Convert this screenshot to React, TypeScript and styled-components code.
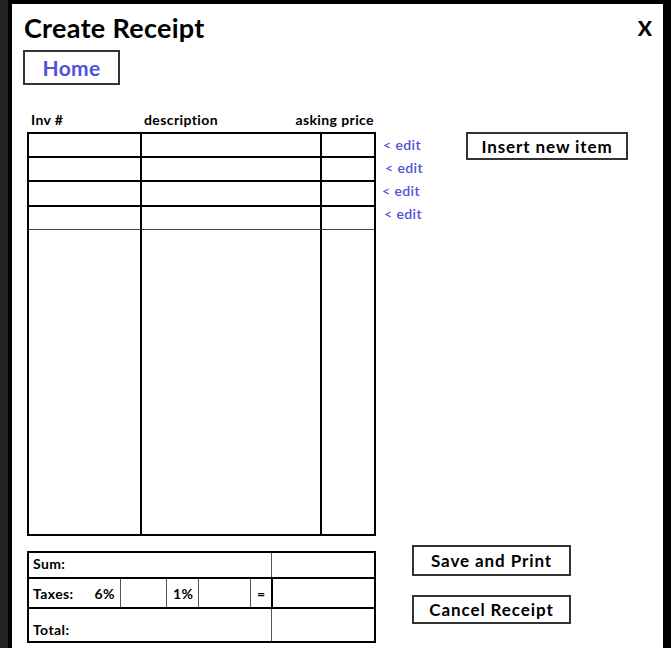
import React from 'react';
import styled, { createGlobalStyle } from 'styled-components';

const GlobalStyle = createGlobalStyle`
  html, body {
    margin: 0;
    padding: 0;
    background: #232323;
  }
  * {
    box-sizing: border-box;
  }
`;

const Frame = styled.div`
  margin-left: 8px;
  width: 663px;
  height: 648px;
  background: #fff;
  border-left: 4px solid #000;
  border-top: 4px solid #000;
  border-right: 8px solid #000;
  font-family: Lato, "Open Sans", sans-serif;
  color: #000;
  overflow: hidden;
`;

const Header = styled.div`
  display: flex;
  justify-content: space-between;
  align-items: flex-start;
  padding: 8px 11px 0 12px;
  height: 46px;
`;

const Title = styled.h1`
  margin: 0;
  font-size: 27px;
  font-weight: 700;
  line-height: 31px;
  letter-spacing: 0.3px;
`;

const Close = styled.span`
  font-size: 21px;
  font-weight: 900;
  line-height: 24px;
  margin-top: 4px;
`;

const HomeButton = styled.button`
  display: block;
  margin-left: 11px;
  width: 97px;
  height: 35px;
  background: #fff;
  border: 2px solid #333;
  color: #5252d6;
  font-family: inherit;
  font-size: 21px;
  font-weight: 700;
  letter-spacing: 0.3px;
  padding: 0;
`;

const Main = styled.div`
  display: flex;
  margin: 25px 0 0 15px;
`;

const LeftCol = styled.div`
  width: 349px;
  display: flex;
  flex-direction: column;
`;

const Labels = styled.div`
  display: grid;
  grid-template-columns: 115px 180px 54px;
  height: 22px;
  font-size: 14px;
  font-weight: 700;
  letter-spacing: 0.4px;
  line-height: 20px;
`;

const Label = styled.span<{ $right?: boolean; $pad?: number }>`
  padding-left: ${(p) => p.$pad ?? 0}px;
  padding-right: ${(p) => (p.$right ? 2 : 0)}px;
  text-align: ${(p) => (p.$right ? 'right' : 'left')};
  white-space: nowrap;
  direction: ${(p) => (p.$right ? 'rtl' : 'ltr')};
`;

const ItemsTable = styled.div`
  display: grid;
  grid-template-columns: 113px 180px 52px;
  grid-template-rows: 24px 24px 25px 23px 1fr;
  height: 404px;
  border: 2px solid #000;
`;

const Cell = styled.div<{ $last?: boolean; $thin?: boolean; $open?: boolean }>`
  border-right: ${(p) => (p.$last ? 'none' : '2px solid #000')};
  border-bottom: ${(p) =>
    p.$open ? 'none' : p.$thin ? '1px solid #444' : '2px solid #000'};
`;

const Summary = styled.div`
  margin-top: 15px;
  height: 92px;
  border: 2px solid #000;
  display: flex;
  flex-direction: column;
`;

const SumRow = styled.div<{ $h: number; $open?: boolean }>`
  display: flex;
  height: ${(p) => p.$h}px;
  border-bottom: ${(p) => (p.$open ? 'none' : '2px solid #000')};
`;

const SumCell = styled.div<{
  $w?: number;
  $line?: 'thin' | 'thick' | 'none';
  $align?: 'start' | 'center' | 'end';
  $pad?: number;
}>`
  ${(p) => (p.$w ? `width: ${p.$w}px; flex: none;` : 'flex: 1;')}
  display: flex;
  align-items: ${(p) =>
    p.$align === 'end' ? 'flex-end' : p.$align === 'start' ? 'flex-start' : 'center'};
  padding-left: ${(p) => p.$pad ?? 4}px;
  font-size: 14px;
  font-weight: 700;
  letter-spacing: 0.4px;
  border-right: ${(p) =>
    p.$line === 'thick' ? '2px solid #000' : p.$line === 'none' ? 'none' : '1px solid #555'};
`;

const Tax = styled.span`
  margin-left: auto;
  margin-right: 5px;
`;

const SumText = styled.span`
  padding-bottom: 4px;
`;

const TotalText = styled.span`
  padding-bottom: 3px;
`;

const RightCol = styled.div`
  flex: 1;
  margin-left: 6px;
  padding: 22px 0 19px;
  display: flex;
  flex-direction: column;
  justify-content: space-between;
`;

const TopRow = styled.div`
  display: flex;
  align-items: flex-start;
`;

const Edits = styled.div`
  width: 84px;
  padding-top: 1px;
  display: flex;
  flex-direction: column;
`;

const EditLink = styled.a<{ $shift: number }>`
  height: 23px;
  line-height: 23px;
  padding-left: ${(p) => p.$shift}px;
  color: #4f4fd9;
  font-size: 14px;
  font-weight: 600;
  letter-spacing: 0.4px;
  text-decoration: none;
`;

const ActionButton = styled.button<{ $w: number; $h: number }>`
  width: ${(p) => p.$w}px;
  height: ${(p) => p.$h}px;
  background: #fff;
  border: 2px solid #333;
  font-family: inherit;
  font-size: 17px;
  font-weight: 700;
  letter-spacing: 0.9px;
  color: #000;
  padding: 0;
`;

const BottomButtons = styled.div`
  margin-left: 30px;
  display: flex;
  flex-direction: column;
  gap: 19px;
`;

const rows = [0, 1, 2, 3];
const editShifts = [1, 3, 0, 2];

export default function App() {
  return (
    <>
      <GlobalStyle />
      <Frame>
        <Header>
          <Title>Create Receipt</Title>
          <Close>X</Close>
        </Header>
        <HomeButton>Home</HomeButton>
        <Main>
          <LeftCol>
            <Labels>
              <Label $pad={4}>Inv #</Label>
              <Label $pad={2}>description</Label>
              <Label $right>asking price</Label>
            </Labels>
            <ItemsTable>
              {rows.map((r) => (
                <React.Fragment key={r}>
                  <Cell $thin={r === 3} />
                  <Cell $thin={r === 3} />
                  <Cell $thin={r === 3} $last />
                </React.Fragment>
              ))}
              <Cell $open />
              <Cell $open />
              <Cell $open $last />
            </ItemsTable>
            <Summary>
              <SumRow $h={26}>
                <SumCell $w={243}>
                  <SumText>Sum:</SumText>
                </SumCell>
                <SumCell $line="none" />
              </SumRow>
              <SumRow $h={30}>
                <SumCell $w={92}>
                  Taxes:<Tax>6%</Tax>
                </SumCell>
                <SumCell $w={46} />
                <SumCell $w={32} $pad={6}>1%</SumCell>
                <SumCell $w={52} />
                <SumCell $w={22} $line="thick" $pad={6}>=</SumCell>
                <SumCell $line="none" />
              </SumRow>
              <SumRow $h={32} $open>
                <SumCell $w={243} $align="end" $pad={4}>
                  <TotalText>Total:</TotalText>
                </SumCell>
                <SumCell $line="none" />
              </SumRow>
            </Summary>
          </LeftCol>
          <RightCol>
            <TopRow>
              <Edits>
                {editShifts.map((s, i) => (
                  <EditLink key={i} $shift={s} href="#">
                    &lt; edit
                  </EditLink>
                ))}
              </Edits>
              <ActionButton $w={162} $h={28}>Insert new item</ActionButton>
            </TopRow>
            <BottomButtons>
              <ActionButton $w={159} $h={31}>Save and Print</ActionButton>
              <ActionButton $w={159} $h={29}>Cancel Receipt</ActionButton>
            </BottomButtons>
          </RightCol>
        </Main>
      </Frame>
    </>
  );
}
